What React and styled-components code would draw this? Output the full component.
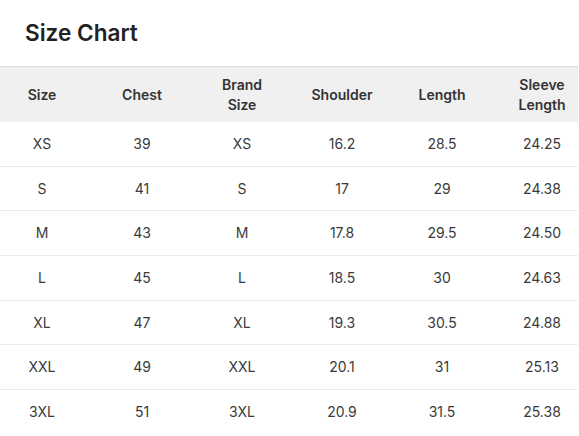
import React from 'react'
import styled, { createGlobalStyle } from 'styled-components'

const GlobalStyle = createGlobalStyle`
  html, body {
    margin: 0;
    padding: 0;
    background: #fff;
  }
  body {
    font-family: Inter, 'Noto Sans', 'Liberation Sans', sans-serif;
    color: #333;
  }
`

const Page = styled.div`
  width: 578px;
`

const Title = styled.h2`
  margin: 0;
  padding: 18px 24px 18px 25px;
  font-size: 22.6px;
  line-height: 30px;
  font-weight: 600;
  color: #222;
`

const TableScroll = styled.div`
  width: 578px;
  overflow: hidden;
`

const Table = styled.table`
  width: 600px;
  margin-left: -8px;
  border-collapse: collapse;
  table-layout: fixed;
  font-size: 14px;
  line-height: 1.4;
`

const HeadCell = styled.th`
  box-sizing: border-box;
  width: 100px;
  padding: 8px 4px;
  background: #f0f0f0;
  border-top: 1px solid #dedede;
  font-weight: 600;
  color: #333;
  text-align: center;
  vertical-align: middle;
`

const Cell = styled.td`
  box-sizing: border-box;
  padding: 12px 4px;
  text-align: center;
  color: #3a3a3a;
  border-bottom: ${p => (p.$last ? 'none' : '1px solid #ebebeb')};
`

const columns = [
  ['Size'],
  ['Chest'],
  ['Brand', 'Size'],
  ['Shoulder'],
  ['Length'],
  ['Sleeve', 'Length'],
]

const rows = [
  ['XS', '39', 'XS', '16.2', '28.5', '24.25'],
  ['S', '41', 'S', '17', '29', '24.38'],
  ['M', '43', 'M', '17.8', '29.5', '24.50'],
  ['L', '45', 'L', '18.5', '30', '24.63'],
  ['XL', '47', 'XL', '19.3', '30.5', '24.88'],
  ['XXL', '49', 'XXL', '20.1', '31', '25.13'],
  ['3XL', '51', '3XL', '20.9', '31.5', '25.38'],
]

const App = () => {
  return (
    <Page>
      <GlobalStyle />
      <Title>Size Chart</Title>
      <TableScroll>
        <Table>
          <thead>
            <tr>
              {columns.map((lines, i) => (
                <HeadCell key={i}>
                  {lines.map((l, j) => (
                    <React.Fragment key={j}>
                      {j > 0 && <br />}
                      {l}
                    </React.Fragment>
                  ))}
                </HeadCell>
              ))}
            </tr>
          </thead>
          <tbody>
            {rows.map((row, i) => (
              <tr key={i}>
                {row.map((v, j) => (
                  <Cell key={j} $last={i === rows.length - 1}>
                    {v}
                  </Cell>
                ))}
              </tr>
            ))}
          </tbody>
        </Table>
      </TableScroll>
    </Page>
  )
}

export default App
